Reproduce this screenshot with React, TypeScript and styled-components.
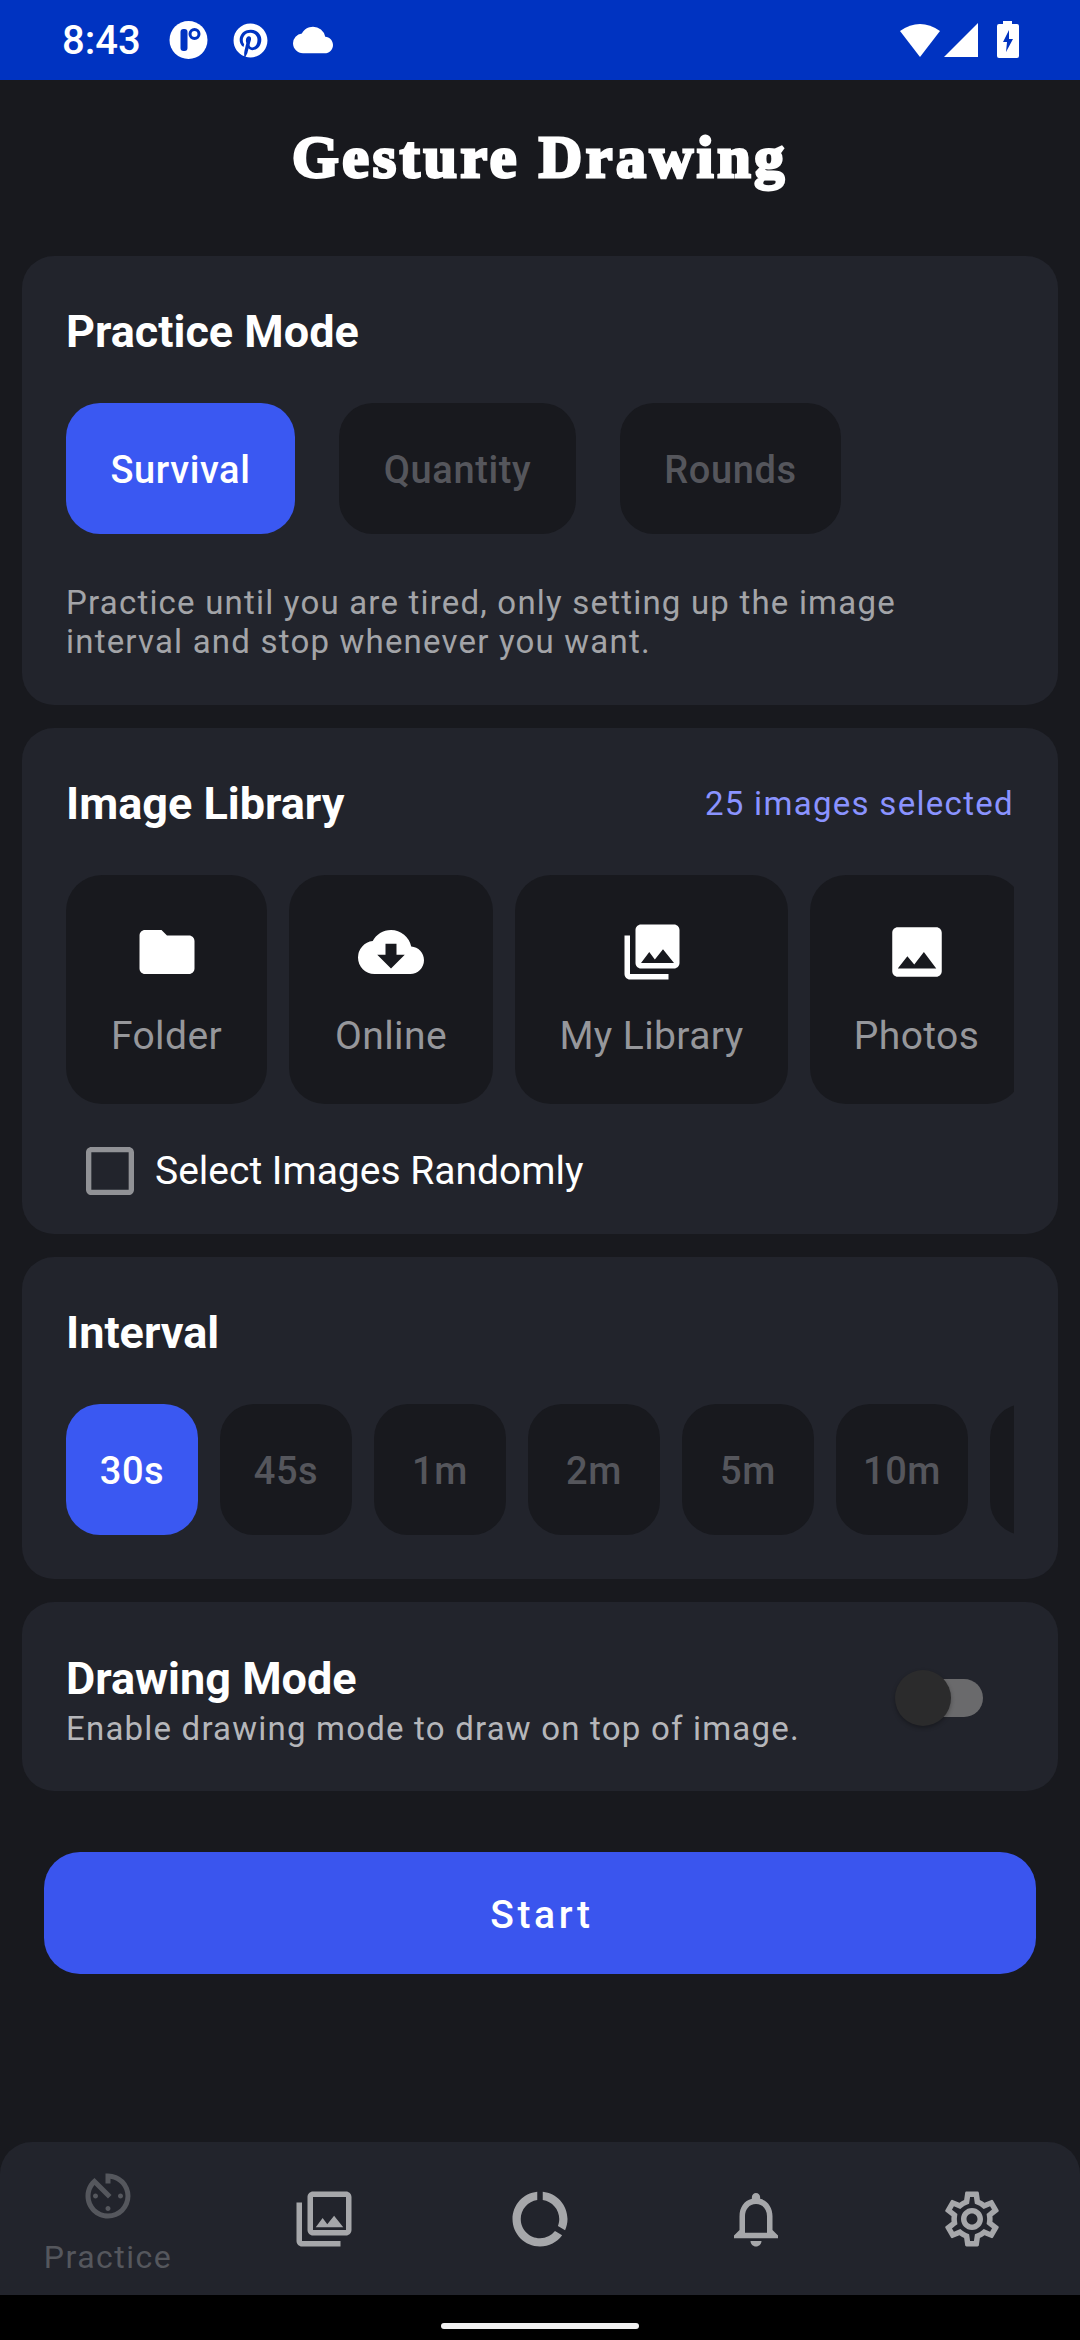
import React from "react";
import styled, { createGlobalStyle } from "styled-components";
import { FaPinterest } from "react-icons/fa";
import {
  MdCloud,
  MdFolder,
  MdCloudDownload,
  MdPhotoLibrary,
  MdImage,
  MdCheckBoxOutlineBlank,
  MdOutlineAvTimer,
  MdOutlinePhotoLibrary,
  MdDataUsage,
  MdOutlineNotifications,
  MdOutlineSettings,
} from "react-icons/md";

const Global = createGlobalStyle`
  html, body { margin: 0; padding: 0; background: #18191e; }
  * { box-sizing: border-box; }
`;

const Screen = styled.div`
  width: 1080px;
  height: 2340px;
  display: flex;
  flex-direction: column;
  background: #18191e;
  font-family: Roboto, "Noto Sans", sans-serif;
  color: #fff;
  overflow: hidden;
`;

const StatusBar = styled.div`
  height: 80px;
  flex: none;
  background: #0033c1;
  display: flex;
  align-items: center;
  padding: 0 60px 0 62px;
`;

const Clock = styled.span`
  font-size: 40px;
  font-weight: 500;
  margin-right: 3px;
`;

const StatusLeft = styled.div`
  display: flex;
  align-items: center;
  gap: 25px;
  flex: 1;
  color: #fff;
`;

const StatusRight = styled.div`
  display: flex;
  align-items: center;
  gap: 2px;
`;

const Title = styled.h1`
  flex: none;
  margin: 0;
  height: 176px;
  display: flex;
  align-items: center;
  justify-content: center;
  padding-bottom: 21px;
  font-family: "Liberation Serif", serif;
  font-weight: 700;
  font-size: 60px;
  letter-spacing: 3.7px;
  -webkit-text-stroke: 3px #fff;
`;

const Cards = styled.div`
  display: flex;
  flex-direction: column;
  gap: 23px;
  padding: 0 22px;
`;

const Card = styled.section<{ $h: number }>`
  height: ${(p) => p.$h}px;
  background: #22242c;
  border-radius: 32px;
  padding: 50px 44px 0;
  display: flex;
  flex-direction: column;
`;

const CardHead = styled.div`
  display: flex;
  align-items: center;
  justify-content: space-between;
  height: 50px;
`;

const CardTitle = styled.h2`
  margin: 0;
  font-size: 45px;
  font-weight: 700;
`;

const Selected = styled.span`
  font-size: 33px;
  color: #8a93ff;
  letter-spacing: 1.3px;
`;

const ModeRow = styled.div`
  display: flex;
  gap: 44px;
  margin-top: 47px;
`;

const Pill = styled.div<{ $active?: boolean; $w: number }>`
  flex: none;
  width: ${(p) => p.$w}px;
  height: 131px;
  border-radius: 34px;
  display: flex;
  align-items: center;
  justify-content: center;
  padding-top: 2px;
  background: ${(p) => (p.$active ? "#3a58f2" : "#18191e")};
  color: ${(p) => (p.$active ? "#fff" : "#55565c")};
  font-size: 38px;
  font-weight: 500;
  letter-spacing: 0.6px;
`;

const Desc = styled.p`
  margin: 49px 0 0;
  font-size: 33px;
  line-height: 39px;
  color: #a3a4a8;
  letter-spacing: 1.2px;
`;

const ScrollRow = styled.div<{ $gap: number; $top: number }>`
  display: flex;
  gap: ${(p) => p.$gap}px;
  margin-top: ${(p) => p.$top}px;
  overflow: hidden;
`;

const Source = styled.div<{ $w: number }>`
  flex: none;
  width: ${(p) => p.$w}px;
  height: 229px;
  border-radius: 36px;
  background: #18191e;
  display: flex;
  flex-direction: column;
  align-items: center;
  justify-content: flex-start;
  padding-top: 44px;
  font-size: 39px;
  color: #96979b;
  svg { color: #fff; flex: none; }
`;

const SourceLabel = styled.span`
  margin-top: 28px;
  letter-spacing: 0.4px;
`;

const CheckRow = styled.div`
  display: flex;
  align-items: center;
  margin: 35px 0 0 12px;
  font-size: 39px;
  color: #fff;
  svg { color: #919296; flex: none; margin-right: 13px; }
`;

const Toggle = styled.div`
  position: relative;
  flex: none;
  width: 84px;
  height: 38px;
  border-radius: 19px;
  background: #6a6a6c;
  margin: 0 31px 10px 0;
`;

const Knob = styled.div`
  position: absolute;
  left: -4px;
  top: -9px;
  width: 56px;
  height: 56px;
  border-radius: 50%;
  background: #2b2b2c;
  box-shadow: 0 2px 4px rgba(0, 0, 0, 0.3);
`;

const DrawRow = styled.div`
  display: flex;
  align-items: center;
  justify-content: space-between;
`;

const DrawText = styled.div`
  display: flex;
  flex-direction: column;
`;

const DrawSub = styled.span`
  font-size: 33px;
  line-height: 48px;
  color: #b5b6ba;
  letter-spacing: 1.2px;
`;

const StartButton = styled.div`
  flex: none;
  margin: 61px 44px 0;
  height: 122px;
  padding: 3px 0 0 4px;
  border-radius: 36px;
  background: #3a55ee;
  display: flex;
  align-items: center;
  justify-content: center;
  font-size: 39px;
  font-weight: 500;
  letter-spacing: 3.6px;
`;

const Nav = styled.nav`
  margin-top: auto;
  flex: none;
  height: 153px;
  background: #22242c;
  border-radius: 32px 32px 0 0;
  display: grid;
  grid-template-columns: repeat(5, 1fr);
`;

const NavItem = styled.div<{ $active?: boolean }>`
  display: flex;
  flex-direction: column;
  align-items: center;
  padding-top: ${(p) => (p.$active ? 24 : 44)}px;
  color: ${(p) => (p.$active ? "#55575d" : "#a6a7aa")};
  font-size: 32px;
  letter-spacing: 1.5px;
`;

const NavLabel = styled.span`
  margin-top: 12px;
`;

const GestureBar = styled.div`
  flex: none;
  height: 45px;
  background: #000;
  display: flex;
  align-items: flex-end;
  justify-content: center;
  padding-bottom: 11px;
`;

const Handle = styled.div`
  width: 198px;
  height: 6px;
  border-radius: 3px;
  background: #f1f1f1;
`;

const RIcon = () => (
  <svg width="39" height="38" viewBox="0 0 38 38">
    <circle cx="19" cy="19" r="19" fill="#fff" />
    <rect x="11" y="8" width="7" height="22" rx="3" fill="#0033c1" />
    <circle cx="25" cy="13" r="4.5" fill="none" stroke="#0033c1" strokeWidth="3" />
  </svg>
);

const Wifi = () => (
  <svg width="42" height="36" viewBox="0 0 42 36">
    <path d="M21 35 L1 9 Q21 -5 41 9 Z" fill="#fff" />
  </svg>
);

const Signal = () => (
  <svg width="36" height="36" viewBox="0 0 36 36">
    <path d="M35 1 V35 H1 Z" fill="#fff" />
  </svg>
);

const BatteryIcon = styled.svg`
  margin-left: 15px;
`;

const Battery = () => (
  <BatteryIcon width="24" height="38" viewBox="0 0 24 38">
    <path
      d="M7 0 H16 V3 H21 Q23 3 23 5 V35 Q23 37 21 37 H3 Q1 37 1 35 V5 Q1 3 3 3 H7 Z M13 9 L7 21 H11 L10 31 L17 18 H13 Z"
      fill="#fff"
      fillRule="evenodd"
    />
  </BatteryIcon>
);

export default function App() {
  return (
    <Screen>
      <Global />
      <StatusBar>
        <StatusLeft>
          <Clock>8:43</Clock>
          <RIcon />
          <FaPinterest size={35} />
          <MdCloud size={40} />
        </StatusLeft>
        <StatusRight>
          <Wifi />
          <Signal />
          <Battery />
        </StatusRight>
      </StatusBar>

      <Title>Gesture Drawing</Title>

      <Cards>
        <Card $h={449}>
          <CardHead>
            <CardTitle>Practice Mode</CardTitle>
          </CardHead>
          <ModeRow>
            <Pill $active $w={229}>Survival</Pill>
            <Pill $w={237}>Quantity</Pill>
            <Pill $w={221}>Rounds</Pill>
          </ModeRow>
          <Desc>
            Practice until you are tired, only setting up the image
            <br />
            interval and stop whenever you want.
          </Desc>
        </Card>

        <Card $h={506}>
          <CardHead>
            <CardTitle>Image Library</CardTitle>
            <Selected>25 images selected</Selected>
          </CardHead>
          <ScrollRow $gap={22} $top={47}>
            <Source $w={201}><MdFolder size={66} /><SourceLabel>Folder</SourceLabel></Source>
            <Source $w={204}><MdCloudDownload size={66} /><SourceLabel>Online</SourceLabel></Source>
            <Source $w={273}><MdPhotoLibrary size={66} /><SourceLabel>My Library</SourceLabel></Source>
            <Source $w={213}><MdImage size={66} /><SourceLabel>Photos</SourceLabel></Source>
          </ScrollRow>
          <CheckRow>
            <MdCheckBoxOutlineBlank size={64} />
            Select Images Randomly
          </CheckRow>
        </Card>

        <Card $h={322}>
          <CardHead>
            <CardTitle>Interval</CardTitle>
          </CardHead>
          <ScrollRow $gap={22} $top={47}>
            <Pill $active $w={132}>30s</Pill>
            <Pill $w={132}>45s</Pill>
            <Pill $w={132}>1m</Pill>
            <Pill $w={132}>2m</Pill>
            <Pill $w={132}>5m</Pill>
            <Pill $w={132}>10m</Pill>
            <Pill $w={132} />
          </ScrollRow>
        </Card>

        <Card $h={189}>
          <DrawRow>
            <DrawText>
              <CardTitle>Drawing Mode</CardTitle>
              <DrawSub>Enable drawing mode to draw on top of image.</DrawSub>
            </DrawText>
            <Toggle><Knob /></Toggle>
          </DrawRow>
        </Card>
      </Cards>

      <StartButton>Start</StartButton>

      <Nav>
        <NavItem $active>
          <MdOutlineAvTimer size={60} />
          <NavLabel>Practice</NavLabel>
        </NavItem>
        <NavItem><MdOutlinePhotoLibrary size={66} /></NavItem>
        <NavItem><MdDataUsage size={66} /></NavItem>
        <NavItem><MdOutlineNotifications size={66} /></NavItem>
        <NavItem><MdOutlineSettings size={66} /></NavItem>
      </Nav>
      <GestureBar><Handle /></GestureBar>
    </Screen>
  );
}
